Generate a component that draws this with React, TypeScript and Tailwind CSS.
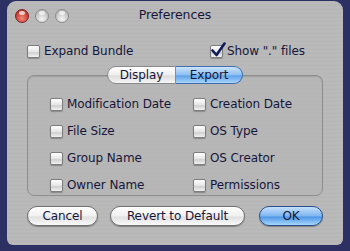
const metal =
  'bg-[repeating-linear-gradient(180deg,#bababa_0px,#b3b3b3_1px,#bebebe_2px,#b6b6b6_3px,#b9b9b9_4px)]';

const Box = ({ checked = false }: { checked?: boolean }) => (
  <span className="relative inline-block w-[13px] h-[13px] shrink-0 rounded-[2px] border border-[#7d7d7d] bg-[linear-gradient(180deg,#ffffff_0%,#e4e4e4_55%,#cfcfcf_60%,#f2f2f2_100%)] shadow-[0_1px_1px_rgba(0,0,0,0.25)]">
    {checked && (
      <svg viewBox="0 0 16 16" className="absolute -left-[1px] -top-[4px] w-[16px] h-[16px]">
        <path d="M2.5 8.5 L6.5 13 L14.5 1.5" fill="none" stroke="#0f1a5a" strokeWidth="2.6" strokeLinecap="round" strokeLinejoin="round" />
      </svg>
    )}
  </span>
);

const Check = ({ label, checked = false }: { label: string; checked?: boolean }) => (
  <div className="flex items-center gap-[4px] h-[14px]">
    <Box checked={checked} />
    <span className="leading-none">{label}</span>
  </div>
);

const Light = ({ color }: { color: 'red' | 'gray' }) => (
  <span
    className={
      color === 'red'
        ? 'relative w-[14px] h-[14px] rounded-full border border-[#7a2222] bg-[radial-gradient(circle_at_50%_70%,#f08a7a_0%,#d0443a_55%,#a12a24_100%)]'
        : 'relative w-[14px] h-[14px] rounded-full border border-[#8c8c8c] bg-[radial-gradient(circle_at_50%_75%,#f4f4f4_0%,#c8c8c8_55%,#a6a6a6_100%)]'
    }
  >
    <span className="absolute left-[3px] top-[1px] w-[6px] h-[4px] rounded-full bg-white/70" />
  </span>
);

const left = ['Modification Date', 'File Size', 'Group Name', 'Owner Name'];
const right = ['Creation Date', 'OS Type', 'OS Creator', 'Permissions'];

export default function App() {
  return (
    <div className="w-[350px] h-[251px] bg-[#2c3063] pl-[7px] pr-[7px] pt-[1px] pb-[6px] font-['DejaVu_Sans',sans-serif] text-[12px] tracking-[-0.1px] text-[#16163a]">
      <div className={`w-[336px] h-[244px] rounded-t-[9px] rounded-b-[6px] flex flex-col ${metal}`}>
        {/* title bar */}
        <div className="relative h-[28px] flex items-center px-[8px] pt-[1px]">
          <div className="flex gap-[6px]">
            <Light color="red" />
            <Light color="gray" />
            <Light color="gray" />
          </div>
          <div className="absolute inset-0 flex items-center justify-center pt-[1px] text-[12.5px]">Preferences</div>
        </div>

        {/* top options */}
        <div className="flex justify-between pl-[20px] pr-[20px] mt-[15px]">
          <Check label="Expand Bundle" />
          <div className="w-[113px]">
            <Check label={'Show "." files'} checked />
          </div>
        </div>

        {/* tabs + group */}
        <div className="mx-[20px] mt-[8px] flex flex-col">
          <div className="relative z-10 flex justify-center h-[18px]">
            <div className="w-[69px] flex items-center justify-center rounded-l-full border border-[#8a8a8a] bg-[linear-gradient(180deg,#ffffff_0%,#eeeeee_50%,#dcdcdc_55%,#f6f6f6_100%)]">
              Display
            </div>
            <div className="w-[67px] flex items-center justify-center rounded-r-full border border-l-0 border-[#3f6fae] bg-[linear-gradient(180deg,#cde3fb_0%,#8dbff2_50%,#5fa2ea_55%,#a8d5fb_100%)]">
              Export
            </div>
          </div>
          <div className="-mt-[9px] h-[121px] rounded-[7px] border border-[#8e8e8e] bg-[#b4b4b4]/40 shadow-[inset_0_1px_1px_rgba(0,0,0,0.12)] pt-[21px] pl-[22px] grid grid-cols-[143px_1fr] content-start gap-y-[13px]">
            {left.map((l, i) => (
              <div key={l} className="contents">
                <Check label={l} />
                <Check label={right[i]} />
              </div>
            ))}
          </div>
        </div>

        {/* buttons */}
        <div className="flex items-center mx-[20px] mt-[10px] gap-[12px]">
          <button className="w-[71px] h-[20px] rounded-full border border-[#6f6f6f] bg-[linear-gradient(180deg,#ffffff_0%,#f0f0f0_50%,#e0e0e0_55%,#fafafa_100%)] shadow-[0_1px_1px_rgba(0,0,0,0.3)]">
            Cancel
          </button>
          <button className="w-[135px] h-[20px] rounded-full border border-[#6f6f6f] bg-[linear-gradient(180deg,#ffffff_0%,#f0f0f0_50%,#e0e0e0_55%,#fafafa_100%)] shadow-[0_1px_1px_rgba(0,0,0,0.3)]">
            Revert to Default
          </button>
          <button className="ml-auto w-[64px] h-[20px] rounded-full border border-[#2c4f8c] bg-[linear-gradient(180deg,#c6e0fb_0%,#7db6f0_50%,#4f97e6_55%,#a6d6fc_100%)] shadow-[0_1px_1px_rgba(0,0,0,0.3)]">
            OK
          </button>
        </div>
      </div>
    </div>
  );
}
